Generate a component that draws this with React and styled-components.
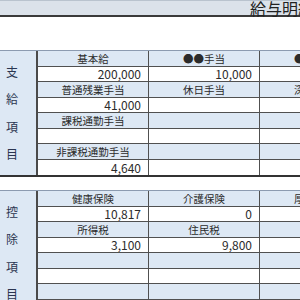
import React from "react";
import styled, { createGlobalStyle } from "styled-components";

const GlobalStyle = createGlobalStyle`
  html, body {
    margin: 0;
    padding: 0;
    background: #ffffff;
    overflow: hidden;
  }
`

const Page = styled.div`
  width: 374px;
  font-family: "Noto Sans CJK JP", "Noto Sans", sans-serif;
  color: #2b2b2b;
`

const TitleBar = styled.div`
  height: 17px;
  box-sizing: border-box;
  display: flex;
  align-items: center;
  justify-content: flex-end;
  padding-right: 60px;
  background: #dbe2ea;
  border-top: 1px solid #b9c3ce;
  border-bottom: 2px solid #3a3a3a;
  font-size: 16px;
  line-height: 16px;
  color: #222;
`

const Gap = styled.div`
  height: ${p => p.h}px;
`

const Section = styled.div`
  display: flex;
  border-top: 1px solid #8c9bb0;
  border-bottom: 2px solid #333;
`

const SideLabel = styled.div`
  width: 38px;
  flex: none;
  background: #dde8f4;
  border-right: 2px solid #4a4a4a;
  display: flex;
  flex-direction: column;
  justify-content: space-evenly;
  align-items: flex-start;
  padding-left: 6px;
  box-sizing: border-box;
  font-size: 12px;
  line-height: 12px;
  color: #2a3550;
`

const Grid = styled.div`
  display: grid;
  grid-template-columns: 110px 111px 111px;
`

const Cell = styled.div`
  box-sizing: border-box;
  height: ${p => p.h}px;
  border-bottom: ${p => (p.last ? "none" : "1px solid #505050")};
  border-left: ${p => (p.first ? "none" : "1px solid #505050")};
  background: ${p => (p.head ? "#dde8f4" : "#ffffff")};
  display: flex;
  align-items: center;
  justify-content: ${p => (p.head ? "center" : "flex-end")};
  padding-right: ${p => (p.head ? 0 : 7)}px;
  font-size: ${p => (p.head ? 10.5 : 12)}px;
  line-height: 12px;
  white-space: nowrap;
  color: #2b2b2b;
`

const pay = [
  ["基本給", "●●手当", "●●手当"],
  ["200,000", "10,000", ""],
  ["普通残業手当", "休日手当", "深夜手当"],
  ["41,000", "", ""],
  ["課税通勤手当", "", ""],
  ["", "", ""],
  ["非課税通勤手当", "", ""],
  ["4,640", "", ""],
]

const deduct = [
  ["健康保険", "介護保険", "厚生年金"],
  ["10,817", "0", ""],
  ["所得税", "住民税", ""],
  ["3,100", "9,800", ""],
  ["", "", ""],
  ["", "", ""],
  ["", "", ""],
  ["", "", ""],
]

function Table({ label, rows }) {
  return (
    <Section>
      <SideLabel>
        {label.split("").map((c, i) => <span key={i}>{c}</span>)}
      </SideLabel>
      <Grid>
        {rows.map((row, r) =>
          row.map((text, c) => (
            <Cell
              key={r + "-" + c}
              head={r % 2 === 0}
              first={c === 0}
              last={r === rows.length - 1}
              h={r % 2 === 0 ? 16 : 15}
            >
              {text}
            </Cell>
          ))
        )}
      </Grid>
    </Section>
  )
}

export default function App() {
  return (
    <Page>
      <GlobalStyle />
      <TitleBar>給与明細</TitleBar>
      <Gap h={33} />
      <Table label="支給項目" rows={pay} />
      <Gap h={13} />
      <Table label="控除項目" rows={deduct} />
    </Page>
  )
}
